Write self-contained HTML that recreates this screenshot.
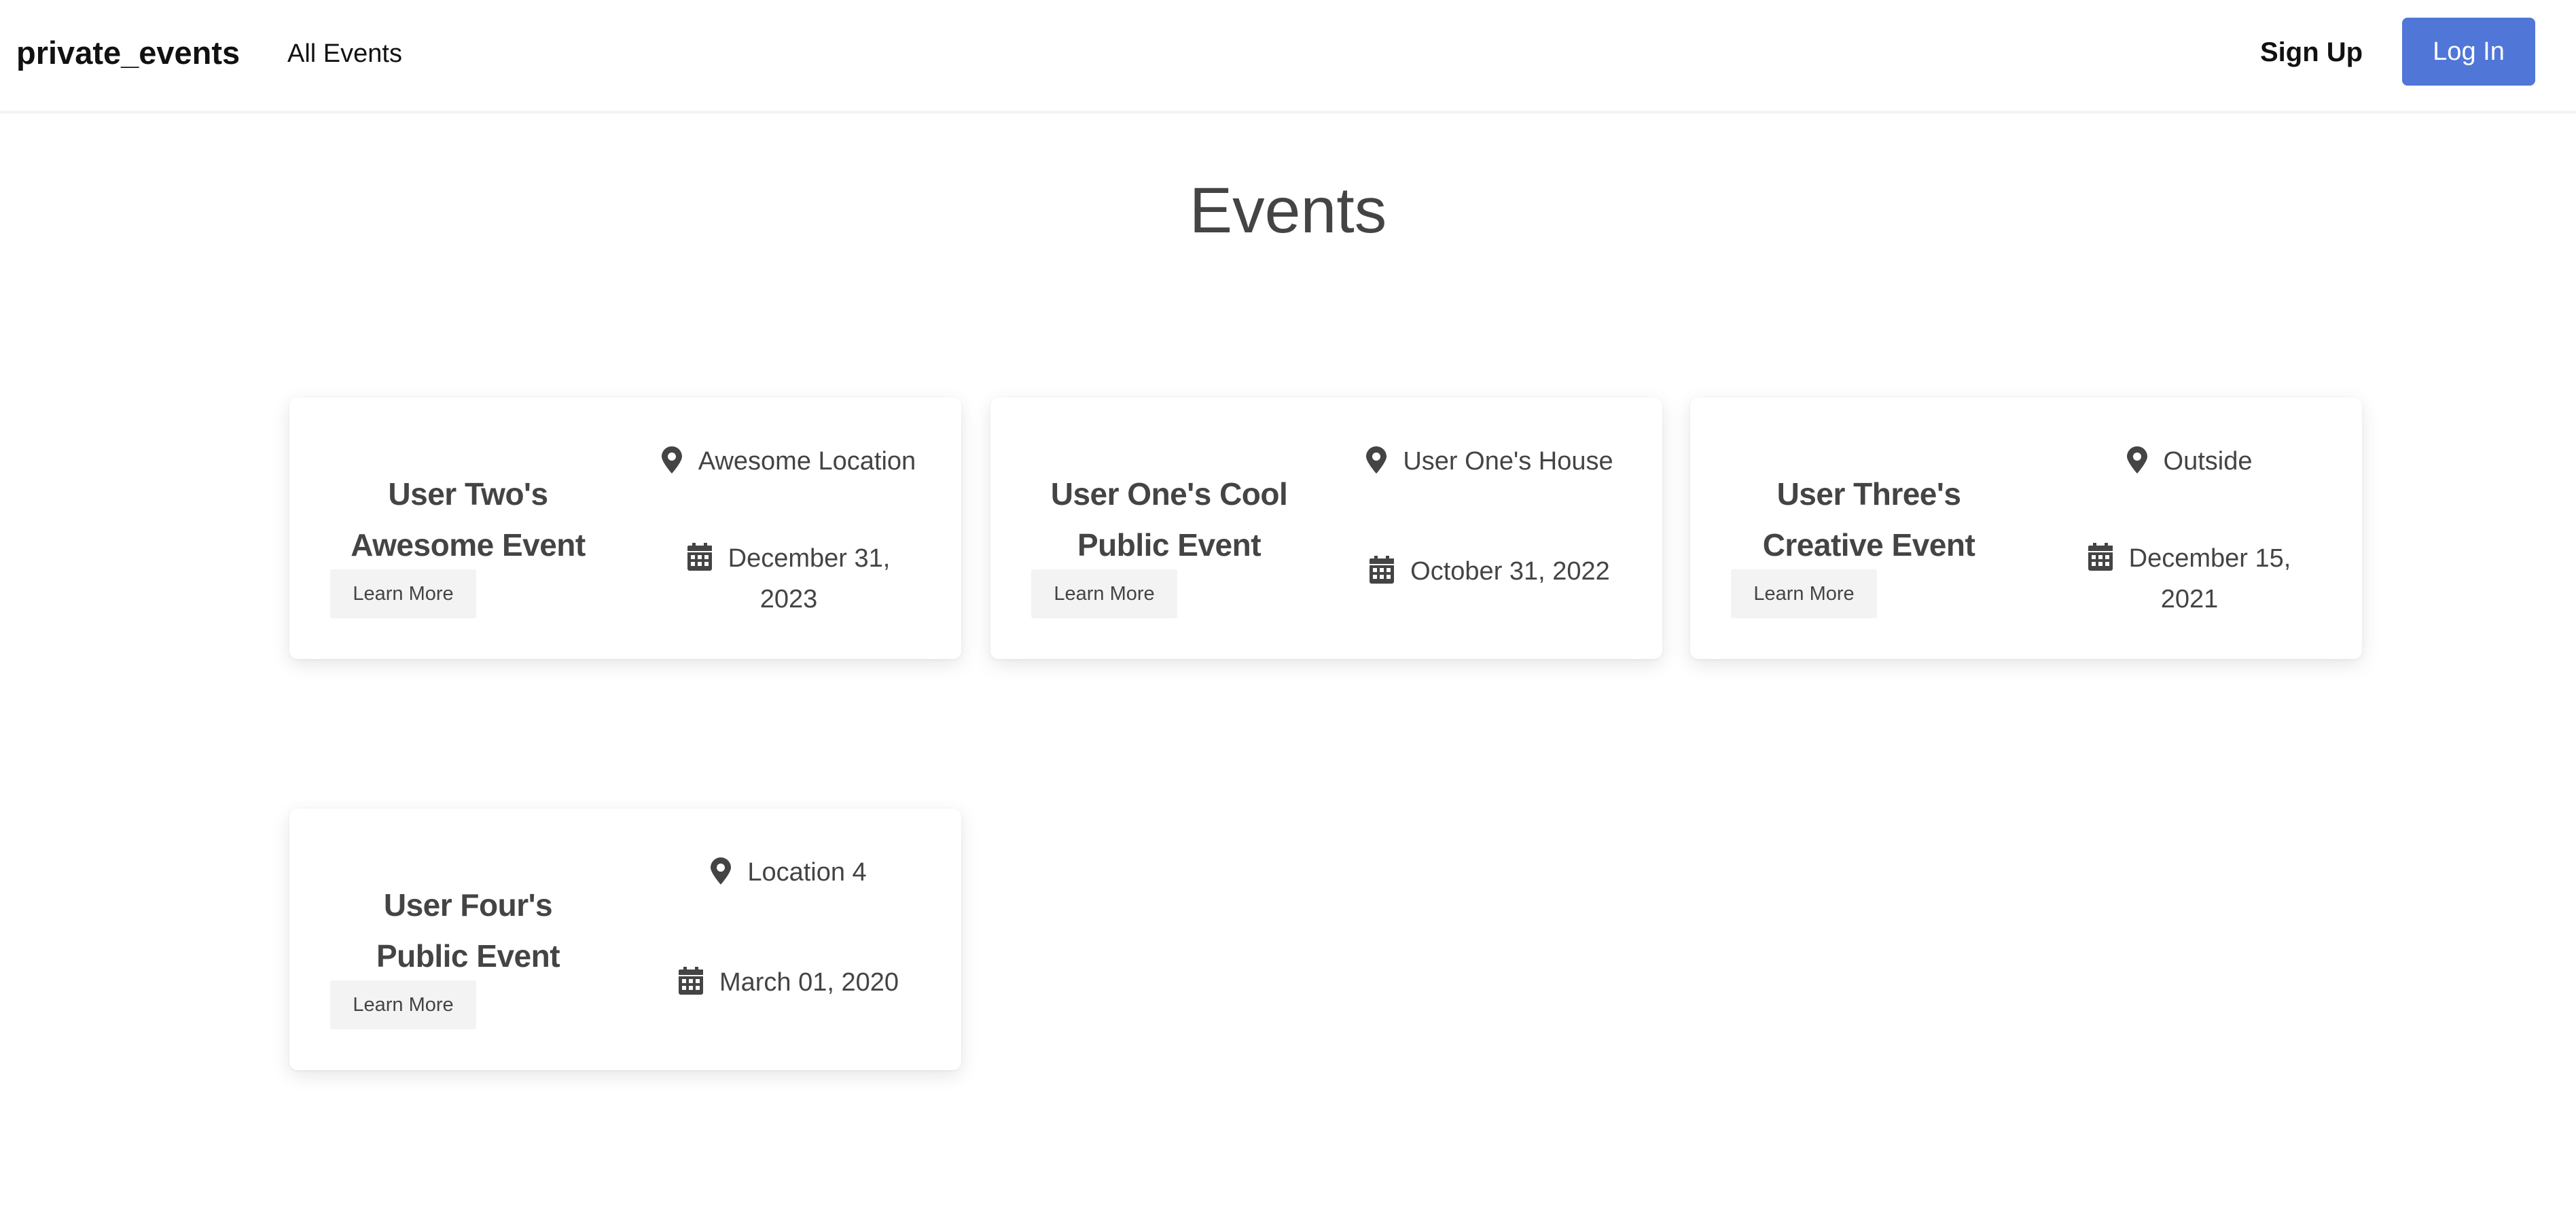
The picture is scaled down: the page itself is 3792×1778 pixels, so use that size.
<!DOCTYPE html>
<html><head><meta charset="utf-8"><style>
*{margin:0;padding:0;box-sizing:border-box}
body{width:3792px;height:1778px;background:#fff;font-family:"Liberation Sans",sans-serif;color:#444;position:relative;overflow:hidden}
.nav{position:absolute;left:0;top:0;width:3792px;height:167px;border-bottom:4px solid #f3f3f3;background:#fff}
.brand{position:absolute;left:24px;top:50px;font-size:47px;font-weight:bold;color:#111;line-height:56px}
.all{position:absolute;left:423px;top:55px;font-size:38px;color:#111;line-height:48px}
.sign{position:absolute;left:3327px;top:53px;font-size:40px;font-weight:bold;color:#111;line-height:48px}
.login{position:absolute;left:3536px;top:26px;width:196px;height:100px;background:#5077d8;border-radius:8px;color:#fff;font-size:38px;line-height:100px;text-align:center}
h1{position:absolute;left:0;width:3792px;top:250px;text-align:center;font-size:95px;font-weight:normal;color:#444;line-height:120px}
.card{position:absolute;width:989px;height:385px;background:#fff;border-radius:12px;box-shadow:0 8px 28px rgba(0,0,0,.10),0 1px 4px rgba(0,0,0,.05)}
.t{position:absolute;left:33px;width:460px;top:105px;text-align:center;font-size:46px;font-weight:bold;line-height:75px;letter-spacing:-0.5px}
.btn{position:absolute;left:60px;top:253px;width:215px;height:72px;background:#f3f3f3;border-radius:3px;font-size:29px;line-height:72px;text-align:center;color:#444}
.loc,.dt{position:absolute;left:520px;width:430px;text-align:center;font-size:38px;line-height:60px}
.loc{top:64px}
.ic{display:inline-block;vertical-align:middle;margin-right:24px;position:relative;top:-4px}
</style></head><body>
<div class="nav">
<div class="brand">private_events</div>
<div class="all">All Events</div>
<div class="sign">Sign Up</div>
<div class="login">Log In</div>
</div>
<h1>Events</h1>

<div class="card" style="left:426px;top:585px">
<div class="t">User Two's<br>Awesome Event</div>
<div class="btn">Learn More</div>
<div class="loc"><svg class="ic" width="30" height="40" viewBox="0 0 30 40"><path fill="#444" d="M15 0C6.7 0 0 6.7 0 15c0 8 15 25 15 25s15-17 15-25C30 6.7 23.3 0 15 0zm0 21a6 6 0 1 1 0-12 6 6 0 0 1 0 12z"/></svg>Awesome Location</div>
<div class="dt" style="top:207px"><svg class="ic" width="36" height="41" viewBox="0 0 36 41"><path fill="#444" d="M7 0h5v6H7zM24 0h5v6h-5zM2 4h34v8H0V6a2 2 0 0 1 2-2zM0 14h36v24a3 3 0 0 1-3 3H3a3 3 0 0 1-3-3z"/><g fill="#fff"><rect x="5" y="18" width="6" height="6"/><rect x="15" y="18" width="6" height="6"/><rect x="25" y="18" width="6" height="6"/><rect x="5" y="28" width="6" height="6"/><rect x="15" y="28" width="6" height="6"/><rect x="25" y="28" width="6" height="6"/></g></svg>December 31,<br>2023</div>
</div>

<div class="card" style="left:1458px;top:585px">
<div class="t">User One's Cool<br>Public Event</div>
<div class="btn">Learn More</div>
<div class="loc"><svg class="ic" width="30" height="40" viewBox="0 0 30 40"><path fill="#444" d="M15 0C6.7 0 0 6.7 0 15c0 8 15 25 15 25s15-17 15-25C30 6.7 23.3 0 15 0zm0 21a6 6 0 1 1 0-12 6 6 0 0 1 0 12z"/></svg>User One's House</div>
<div class="dt" style="top:226px"><svg class="ic" width="36" height="41" viewBox="0 0 36 41"><path fill="#444" d="M7 0h5v6H7zM24 0h5v6h-5zM2 4h34v8H0V6a2 2 0 0 1 2-2zM0 14h36v24a3 3 0 0 1-3 3H3a3 3 0 0 1-3-3z"/><g fill="#fff"><rect x="5" y="18" width="6" height="6"/><rect x="15" y="18" width="6" height="6"/><rect x="25" y="18" width="6" height="6"/><rect x="5" y="28" width="6" height="6"/><rect x="15" y="28" width="6" height="6"/><rect x="25" y="28" width="6" height="6"/></g></svg>October 31, 2022</div>
</div>

<div class="card" style="left:2488px;top:585px">
<div class="t">User Three's<br>Creative Event</div>
<div class="btn">Learn More</div>
<div class="loc"><svg class="ic" width="30" height="40" viewBox="0 0 30 40"><path fill="#444" d="M15 0C6.7 0 0 6.7 0 15c0 8 15 25 15 25s15-17 15-25C30 6.7 23.3 0 15 0zm0 21a6 6 0 1 1 0-12 6 6 0 0 1 0 12z"/></svg>Outside</div>
<div class="dt" style="top:207px"><svg class="ic" width="36" height="41" viewBox="0 0 36 41"><path fill="#444" d="M7 0h5v6H7zM24 0h5v6h-5zM2 4h34v8H0V6a2 2 0 0 1 2-2zM0 14h36v24a3 3 0 0 1-3 3H3a3 3 0 0 1-3-3z"/><g fill="#fff"><rect x="5" y="18" width="6" height="6"/><rect x="15" y="18" width="6" height="6"/><rect x="25" y="18" width="6" height="6"/><rect x="5" y="28" width="6" height="6"/><rect x="15" y="28" width="6" height="6"/><rect x="25" y="28" width="6" height="6"/></g></svg>December 15,<br>2021</div>
</div>

<div class="card" style="left:426px;top:1190px">
<div class="t">User Four's<br>Public Event</div>
<div class="btn">Learn More</div>
<div class="loc"><svg class="ic" width="30" height="40" viewBox="0 0 30 40"><path fill="#444" d="M15 0C6.7 0 0 6.7 0 15c0 8 15 25 15 25s15-17 15-25C30 6.7 23.3 0 15 0zm0 21a6 6 0 1 1 0-12 6 6 0 0 1 0 12z"/></svg>Location 4</div>
<div class="dt" style="top:226px"><svg class="ic" width="36" height="41" viewBox="0 0 36 41"><path fill="#444" d="M7 0h5v6H7zM24 0h5v6h-5zM2 4h34v8H0V6a2 2 0 0 1 2-2zM0 14h36v24a3 3 0 0 1-3 3H3a3 3 0 0 1-3-3z"/><g fill="#fff"><rect x="5" y="18" width="6" height="6"/><rect x="15" y="18" width="6" height="6"/><rect x="25" y="18" width="6" height="6"/><rect x="5" y="28" width="6" height="6"/><rect x="15" y="28" width="6" height="6"/><rect x="25" y="28" width="6" height="6"/></g></svg>March 01, 2020</div>
</div>
</body></html>
